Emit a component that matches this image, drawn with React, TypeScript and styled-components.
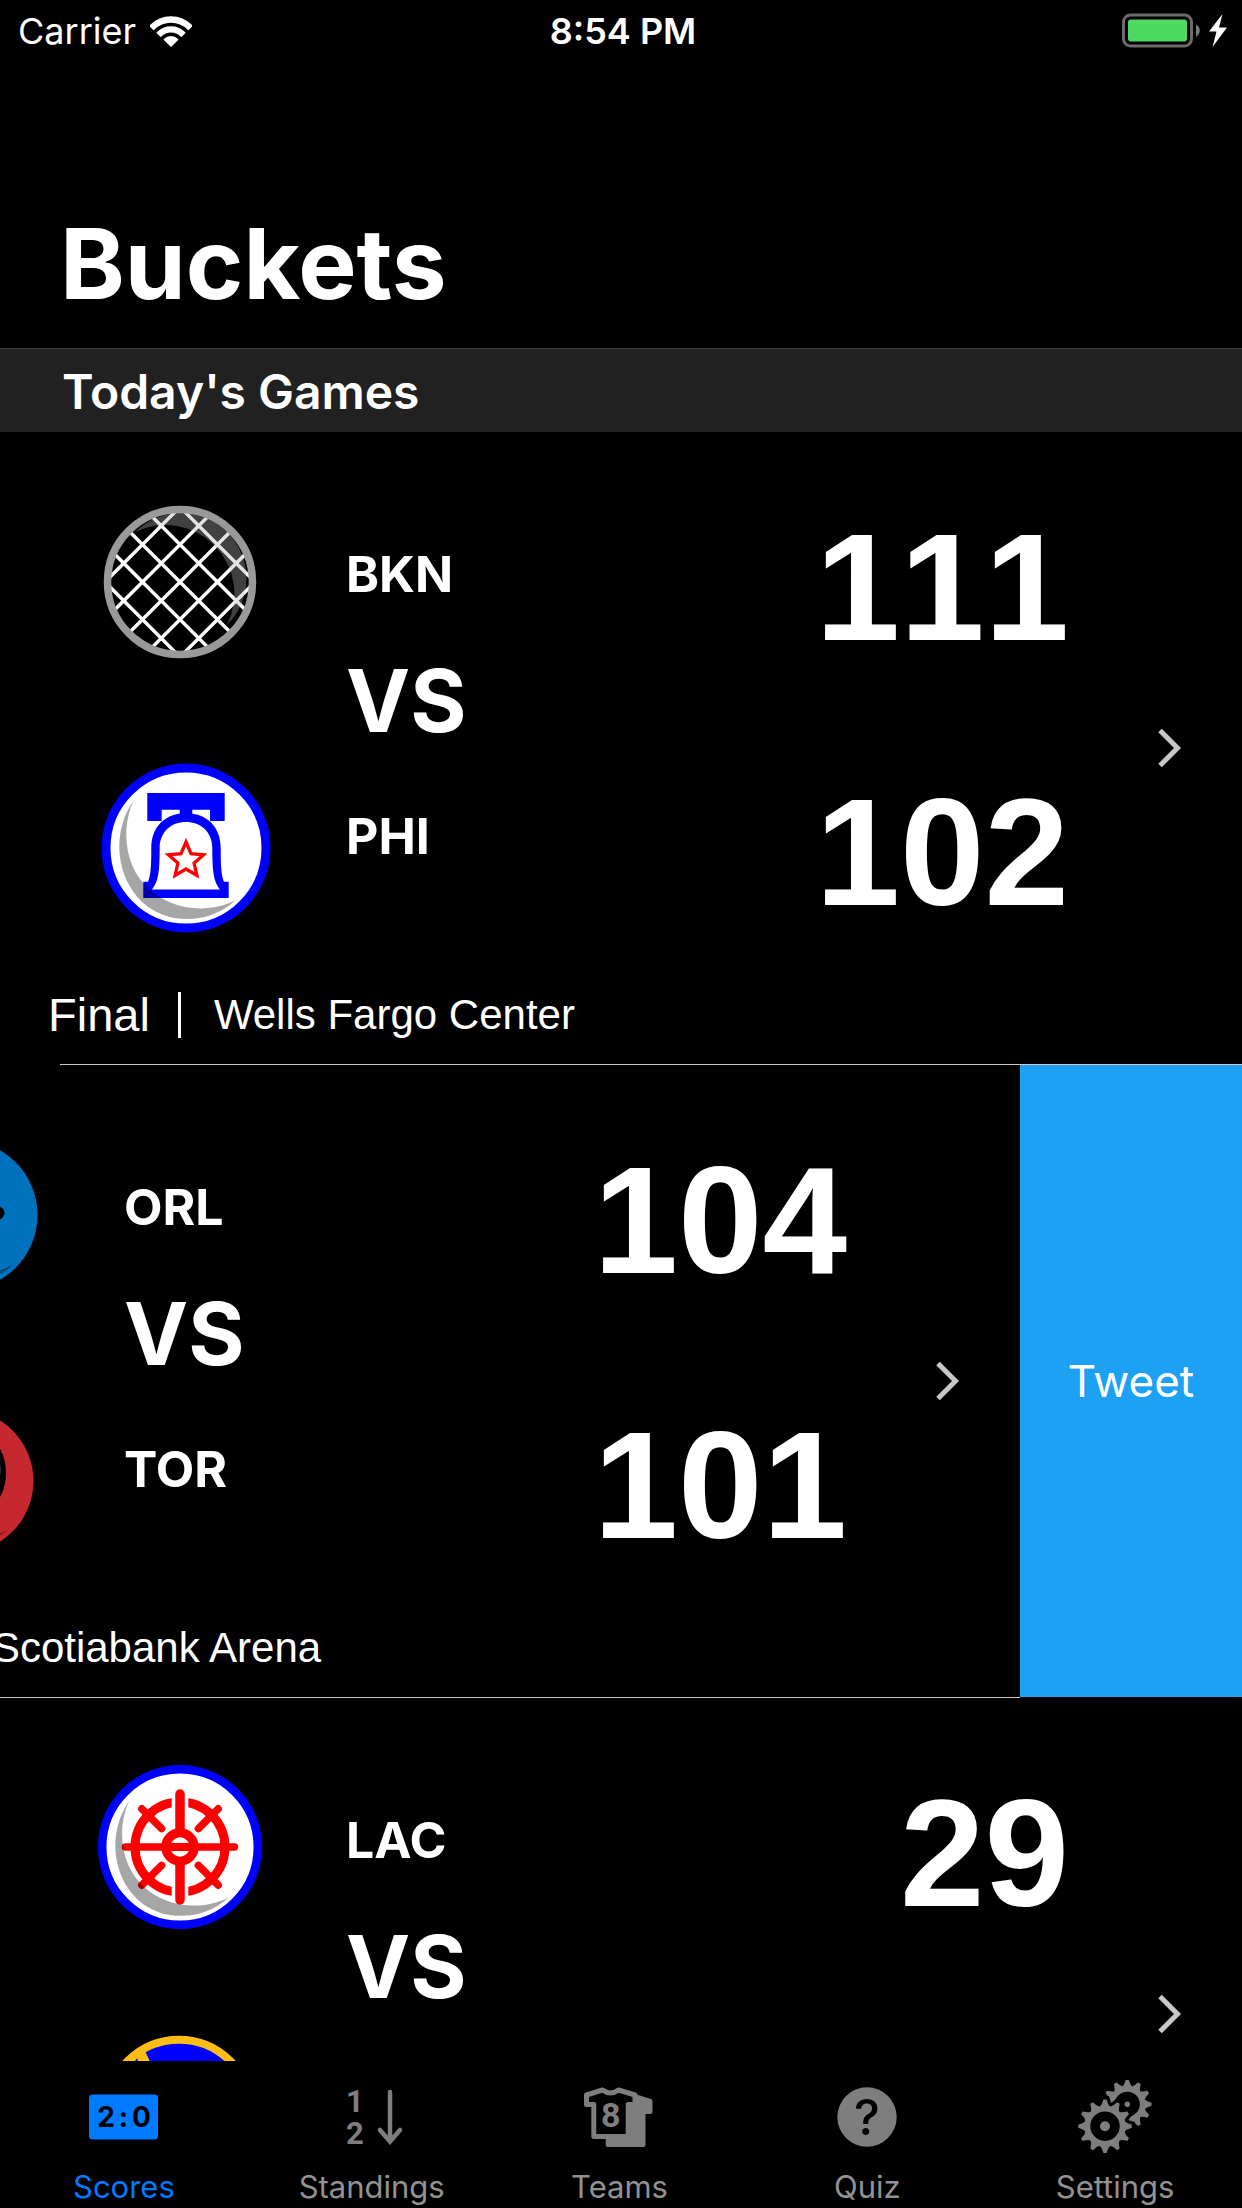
import React from "react";
import styled, { createGlobalStyle } from "styled-components";

const sans = `Inter, "Liberation Sans", sans-serif`;
const grotesque = `"Liberation Sans", Arial, sans-serif`;

const GlobalStyle = createGlobalStyle`
  *, *::before, *::after { box-sizing: border-box; }
  body {
    margin: 0;
    background: #000;
    color: #fff;
    font-family: ${sans};
  }
  h1, h2, ul, p { margin: 0; padding: 0; }
  ul { list-style: none; }
  svg { display: block; flex: none; }
`;

const Screen = styled.div`
  display: flex;
  flex-direction: column;
  height: 100vh;
  overflow: hidden;
`;

/* ---------- status bar ---------- */

const StatusBar = styled.div`
  display: grid;
  grid-template-columns: 1fr auto 1fr;
  align-items: center;
  height: 62px;
  padding: 0 14px 0 18px;
  font-size: 36px;
  line-height: 44px;
`;

const Carrier = styled.div`
  display: flex;
  align-items: center;
  gap: 14px;
`;

const Clock = styled.time`
  font-weight: 600;
`;

const Power = styled.div`
  display: flex;
  align-items: center;
  justify-content: flex-end;
`;

/* ---------- headings ---------- */

const TitleBar = styled.header`
  padding: 142px 60px 24px;
`;

const Title = styled.h1`
  font-size: 98px;
  line-height: 120px;
  font-weight: 700;
`;

const SectionHeader = styled.h2`
  padding: 13px 62px 10px;
  border-top: 1px solid #414141;
  background: #212121;
  font-size: 48px;
  line-height: 60px;
  font-weight: 600;
`;

/* ---------- games ---------- */

const GameList = styled.ul`
  flex: 1;
  min-height: 0;
  overflow: hidden;
`;

const ACTION_WIDTH = 222;

const GameRow = styled.li`
  display: flex;
  overflow: hidden;
`;

const GameCell = styled.article<{ $open?: boolean }>`
  flex: none;
  width: 100%;
  margin-left: ${(p) => (p.$open ? -ACTION_WIDTH : 0)}px;
`;

const CellBody = styled.div`
  display: flex;
  align-items: center;
  min-height: 632px;
`;

const CellMain = styled.div`
  flex: 1;
  align-self: stretch;
`;

const Divider = styled.div`
  height: 1px;
  margin-left: 60px;
  background: #c8c7cc;
`;

const Matchup = styled.div`
  display: grid;
  grid-template-columns: 168px 1fr auto;
  padding: 66px 88px 0 98px;
`;

const Logos = styled.div`
  display: flex;
  flex-direction: column;
  gap: 97px;
`;

const Names = styled.div`
  display: flex;
  flex-direction: column;
  gap: 45px;
  padding: 46px 0 0 80px;
`;

const TeamName = styled.span`
  font-size: 50px;
  line-height: 60px;
  font-weight: 700;
`;

const Versus = styled.span`
  margin-bottom: 8px;
  font-size: 86px;
  line-height: 104px;
  font-weight: 700;
`;

const Scores = styled.div`
  display: flex;
  flex-direction: column;
  align-items: flex-end;
  gap: 115px;
  padding-top: 14px;
`;

const Score = styled.span`
  font-family: ${grotesque};
  font-size: 152px;
  line-height: 150px;
  font-weight: 700;
  font-kerning: none;
`;

const GameInfo = styled.p`
  display: flex;
  align-items: center;
  margin-top: 56px;
  padding: 0 0 21px 48px;
  font-family: ${grotesque};
  line-height: 56px;
`;

const GameStatus = styled.span`
  padding-right: 28px;
  font-size: 47px;
`;

const InfoBar = styled.span`
  width: 3px;
  height: 46px;
  background: #fff;
`;

const Venue = styled.span`
  padding-left: 33px;
  font-size: 42px;
`;

const Disclosure = styled.a`
  padding: 20px 60px 20px 0;
`;

const SwipeAction = styled.button`
  flex: none;
  width: ${ACTION_WIDTH}px;
  margin: 0 0 1px;
  padding: 0;
  border: 0;
  background: #1da1f3;
  color: #fff;
  font-family: ${sans};
  font-size: 44px;
  line-height: 52px;
`;

/* ---------- tab bar ---------- */

const TabBar = styled.nav`
  display: grid;
  grid-template-columns: repeat(5, 1fr);
  padding: 19px 3px 3px 0;
  background: #000;
`;

const Tab = styled.button<{ $active?: boolean }>`
  display: flex;
  flex-direction: column;
  align-items: center;
  gap: 15px;
  padding: 0;
  border: 0;
  background: none;
  color: ${(p) => (p.$active ? "#007aff" : "#929292")};
  font-family: ${sans};
  font-size: 31px;
  line-height: 36px;
`;

const TabIcon = styled.svg`
  width: 74px;
  height: 74px;
`;

/* ---------- status icons ---------- */

const WifiIcon = () => (
  <svg width="42" height="31" viewBox="0 0 42 31" aria-hidden="true">
    <clipPath id="wifi-wedge">
      <path d="M21 31 L-7 4 V-4 H49 V4 Z" />
    </clipPath>
    <g clipPath="url(#wifi-wedge)" fill="none" stroke="#fff">
      <circle cx="21" cy="30" r="26.5" strokeWidth="6.5" />
      <circle cx="21" cy="30" r="16.7" strokeWidth="6.2" />
      <circle cx="21" cy="30" r="10" fill="#fff" stroke="none" />
    </g>
  </svg>
);

const BatteryIcon = () => (
  <svg width="107" height="36" viewBox="0 0 107 36" aria-hidden="true">
    <rect x="2.5" y="2" width="68" height="31" rx="7" fill="none" stroke="#6b6b6b" strokeWidth="3" />
    <rect x="7" y="6.5" width="59" height="22" rx="3" fill="#4cd964" />
    <path d="M75 11.500 C80 13.500 80 21.500 75 23.500 Z" fill="#7a7a7a" />
    <path d="M101.500 1 L88 18.500 H95.500 L91.500 34 L106 14.500 H98 Z" fill="#fff" />
  </svg>
);

const Chevron = () => (
  <svg width="25" height="40" viewBox="0 0 25 40" aria-hidden="true">
    <path d="M3 2.500 L20.500 20 L3 37.500" fill="none" stroke="#c7c7cc" strokeWidth="5" />
  </svg>
);

/* ---------- team logos ---------- */

const LogoFrame = ({ name, children }: { name: string; children: React.ReactNode }) => (
  <svg width="168" height="168" viewBox="-84 -84 168 168" overflow="visible" role="img" aria-label={name}>
    {children}
  </svg>
);

const Shade = () => (
  <path d="M-52 -48 C-85 -2 -60 71 1 71 C20 71 37 64 50 52 C5 75 -60 50 -59.700 -14 C-59.500 -26 -57 -38 -52 -48 Z" fill="#000" fillOpacity="0.35" />
);

const starPoints = (cx: number, cy: number, outer: number, inner: number) =>
  Array.from({ length: 10 }, (_, i) => {
    const r = i % 2 ? inner : outer;
    const a = (Math.PI / 5) * i - Math.PI / 2;
    return `${(cx + r * Math.cos(a)).toFixed(2)},${(cy + r * Math.sin(a)).toFixed(2)}`;
  }).join(" ");

const netOffsets = [-75, -37.5, 0, 37.5, 75];

const NetLogo = () => (
  <LogoFrame name="BKN">
    <g transform="translate(-2 0)">
      <clipPath id="net-clip">
        <circle r="70" />
      </clipPath>
      <g clipPath="url(#net-clip)" stroke="#fff" strokeWidth="3.4">
        {netOffsets.map((k) => (
          <React.Fragment key={k}>
            <line x1="-90" y1={-90 + k} x2="90" y2={90 + k} />
            <line x1="-90" y1={90 + k} x2="90" y2={-90 + k} />
          </React.Fragment>
        ))}
      </g>
      <path d="M-45 -50 A65.400 65.400 0 0 1 47 43 A69 69 0 0 0 -45 -50 Z" fill="#b4b4b4" fillOpacity="0.36" />
      <circle r="72.500" fill="none" stroke="#999" strokeWidth="7.500" />
    </g>
  </LogoFrame>
);

const BellLogo = () => (
  <LogoFrame name="PHI">
    <g transform="translate(4 1)">
      <circle r="80" fill="#fff" stroke="#00f" strokeWidth="9" />
      <path d="M-38.700 -55 H38.700 V-27 H24 V-38.300 H6.300 V-30 H-6.300 V-38.300 H-24.300 V-27 H-38.700 Z" fill="#00f" />
      <path
        d="M-42.700 50 V33.700 H-38 C-35.500 28 -34.700 20 -34.700 0 C-34.700 -22 -20 -34.700 0 -34.700 C20 -34.700 34.700 -22 34.700 0 C34.700 20 35.500 28 38 33.700 H42.700 V50 Z"
        fill="#00f"
      />
      <path
        d="M-34 41.500 C-28 34 -26.300 25 -26.300 0 C-26.300 -16 -15 -26 0 -26 C15 -26 26.300 -16 26.300 0 C26.300 25 28 34 34 41.500 Z"
        fill="#fff"
      />
      <polygon points={starPoints(0, 12.5, 18.5, 8.5)} fill="none" stroke="#f00" strokeWidth="3.300" />
      <Shade />
    </g>
  </LogoFrame>
);

const ShootingBallLogo = () => (
  <LogoFrame name="ORL">
    <g transform="translate(3 0)">
      <circle r="74.600" fill="#0071bd" />
      <circle cx="35" cy="-2" r="6.500" fill="#000" />
      <path d="M-52 -48 A71 71 0 0 0 50 50 A75 75 0 0 1 -52 -48 Z" fill="#000" fillOpacity="0.35" />
    </g>
  </LogoFrame>
);

const ClawLogo = () => (
  <LogoFrame name="TOR">
    <g transform="translate(2 1)">
      <circle r="71.500" fill="#c5282f" />
      <ellipse cx="26" cy="-8" rx="18" ry="32" fill="#000" />
      <ellipse cx="26" cy="-11" rx="12.500" ry="22" fill="#666" />
      <path d="M-50 -46 A68 68 0 0 0 46 49 A72 72 0 0 1 -50 -46 Z" fill="#000" fillOpacity="0.35" />
    </g>
  </LogoFrame>
);

const WheelLogo = () => (
  <LogoFrame name="LAC">
    <g transform="translate(-2 -1)">
      <circle r="77.800" fill="#fff" stroke="#00f" strokeWidth="8.500" />
      <circle r="45" fill="none" stroke="#f00" strokeWidth="9" />
      <rect x="-8.300" y="-56" width="16.600" height="112" fill="#fff" />
      <g stroke="#f00" strokeLinecap="round">
        <line x1="0" y1="-53" x2="0" y2="53" strokeWidth="9.500" />
        <line x1="-54.500" y1="0" x2="54.500" y2="0" strokeWidth="7.500" />
        {[45, 135, 225, 315].map((a) => (
          <line key={a} x1="26" y1="0" x2="54" y2="0" strokeWidth="7.500" transform={`rotate(${a})`} />
        ))}
      </g>
      <circle r="14.200" fill="#fff" stroke="#f00" strokeWidth="9" />
      <line x1="-14" y1="0" x2="14" y2="0" stroke="#f00" strokeWidth="8" />
      <g transform="scale(0.97)">
        <Shade />
      </g>
    </g>
  </LogoFrame>
);

const BridgeLogo = () => (
  <LogoFrame name="GSW">
    <g transform="translate(-3 -1)">
      <circle r="72.300" fill="#00f" stroke="#fdbd12" strokeWidth="8" />
      <polygon points="-53,-50 -34,-61 -26,-44 -41,-44 -41.500,-54 -50,-45" fill="#fdbd12" />
    </g>
  </LogoFrame>
);

/* ---------- tab icons ---------- */

const ScoreboardGlyph = () => (
  <TabIcon viewBox="0 0 74 74" aria-hidden="true">
    <rect x="2" y="14.500" width="69" height="45" rx="3.500" fill="#007aff" />
    <g fontFamily="Inter" fontWeight="700" fontSize="28" textAnchor="middle" fill="#000">
      <text x="19" y="47">2</text>
      <text x="36.500" y="47">:</text>
      <text x="54.500" y="47">0</text>
    </g>
  </TabIcon>
);

const RankGlyph = () => (
  <TabIcon viewBox="0 0 74 74" aria-hidden="true">
    <g fontFamily="Roboto" fontWeight="700" fontSize="31" textAnchor="middle" fill="#7e7e7e">
      <text x="20" y="32">1</text>
      <text x="20" y="64">2</text>
    </g>
    <path
      d="M55 12 V61 M45 50 L55 61.500 L65 50"
      fill="none"
      stroke="#7e7e7e"
      strokeWidth="4.500"
      strokeLinecap="round"
    />
  </TabIcon>
);

const JerseyGlyph = () => (
  <TabIcon viewBox="-1 -7 74 74" aria-hidden="true">
    <path
      d="M52 7 L68 12 Q69.500 12.500 69.500 14 V25 Q69.500 27 67.500 27 H62.500 V58 Q62.500 60 60.500 60 H24.700 Q22.700 60 22.700 58 V50 H45 V15 Z"
      fill="#7e7e7e"
    />
    <path
      d="M3.500 8 L19.500 3 Q27.500 9 35.500 3 L52 8 V17.500 H45.200 V49.500 H10.800 V17.500 H3.500 Z"
      fill="#000"
      stroke="#7e7e7e"
      strokeWidth="5"
      strokeLinejoin="round"
    />
    <text x="27.700" y="39.500" fontFamily="Roboto" fontWeight="700" fontSize="34" textAnchor="middle" fill="#7e7e7e">
      8
    </text>
  </TabIcon>
);

const QuestionGlyph = () => (
  <TabIcon viewBox="0 0 74 74" aria-hidden="true">
    <circle cx="37" cy="37" r="29.700" fill="#7e7e7e" />
    <text x="37" y="55" fontFamily="Inter" fontWeight="500" fontSize="49" textAnchor="middle" fill="#000">
      ?
    </text>
  </TabIcon>
);

type GearProps = { cx: number; cy: number; body: number; hole: number; tip: number; dot: number; halo?: boolean };

const Gear = ({ cx, cy, body, hole, tip, dot, halo }: GearProps) => {
  const teeth = Array.from({ length: 12 }, (_, i) => i * 30);
  const shape = (color: string, grow: number) => (
    <g fill={color} stroke={color} strokeLinecap="round">
      {teeth.map((a) => (
        <path
          key={a}
          d={`M${body - 2} -5 Q${body + 1} -2 ${tip - 1.5} -1 V1 Q${body + 1} 2 ${body - 2} 5 Z`}
          strokeWidth={1.5 + grow * 2}
          transform={`rotate(${a})`}
        />
      ))}
      <circle r={body + grow} stroke="none" />
    </g>
  );
  return (
    <g transform={`translate(${cx} ${cy})`}>
      {halo && shape("#000", 3.2)}
      {shape("#7e7e7e", 0)}
      <circle r={hole} fill="#000" />
      <circle r={dot} fill="#7e7e7e" />
    </g>
  );
};

const GearsGlyph = () => (
  <TabIcon viewBox="0 0 74 74" aria-hidden="true">
    <Gear cx={49.3} cy={24.2} body={18} hole={12.5} tip={25} dot={2.7} />
    <Gear cx={27} cy={46.2} body={20.5} hole={14.7} tip={27.5} dot={5} halo />
  </TabIcon>
);

/* ---------- data ---------- */

type Team = { name?: string; logo: React.ComponentType; score?: number };
type Game = { away: Team; home: Team; status?: string; venue?: string; open?: boolean };

const games: Game[] = [
  {
    away: { name: "BKN", logo: NetLogo, score: 111 },
    home: { name: "PHI", logo: BellLogo, score: 102 },
    status: "Final",
    venue: "Wells Fargo Center",
  },
  {
    away: { name: "ORL", logo: ShootingBallLogo, score: 104 },
    home: { name: "TOR", logo: ClawLogo, score: 101 },
    status: "Final",
    venue: "Scotiabank Arena",
    open: true,
  },
  {
    away: { name: "LAC", logo: WheelLogo, score: 29 },
    home: { logo: BridgeLogo },
  },
];

const tabs = [
  { label: "Scores", icon: ScoreboardGlyph, active: true },
  { label: "Standings", icon: RankGlyph },
  { label: "Teams", icon: JerseyGlyph },
  { label: "Quiz", icon: QuestionGlyph },
  { label: "Settings", icon: GearsGlyph },
];

const GameItem = ({ game }: { game: Game }) => {
  const { away, home, status, venue, open } = game;
  return (
    <GameRow>
      <GameCell $open={open}>
        <CellBody>
          <CellMain>
            <Matchup>
              <Logos>
                <away.logo />
                <home.logo />
              </Logos>
              <Names>
                <TeamName>{away.name}</TeamName>
                <Versus>VS</Versus>
                {home.name && <TeamName>{home.name}</TeamName>}
              </Names>
              <Scores>
                <Score>{away.score}</Score>
                {home.score !== undefined && <Score>{home.score}</Score>}
              </Scores>
            </Matchup>
            {status && (
              <GameInfo>
                <GameStatus>{status}</GameStatus>
                <InfoBar />
                <Venue>{venue}</Venue>
              </GameInfo>
            )}
          </CellMain>
          <Disclosure href="#game" aria-label="Game details">
            <Chevron />
          </Disclosure>
        </CellBody>
        <Divider />
      </GameCell>
      {open && <SwipeAction type="button">Tweet</SwipeAction>}
    </GameRow>
  );
};

export default function App() {
  return (
    <Screen>
      <GlobalStyle />
      <StatusBar>
        <Carrier>
          Carrier
          <WifiIcon />
        </Carrier>
        <Clock>8:54 PM</Clock>
        <Power>
          <BatteryIcon />
        </Power>
      </StatusBar>
      <TitleBar>
        <Title>Buckets</Title>
      </TitleBar>
      <SectionHeader>Today's Games</SectionHeader>
      <GameList>
        {games.map((game) => (
          <GameItem key={game.away.name} game={game} />
        ))}
      </GameList>
      <TabBar>
        {tabs.map(({ label, icon: Icon, active }) => (
          <Tab key={label} type="button" $active={active}>
            <Icon />
            {label}
          </Tab>
        ))}
      </TabBar>
    </Screen>
  );
}
